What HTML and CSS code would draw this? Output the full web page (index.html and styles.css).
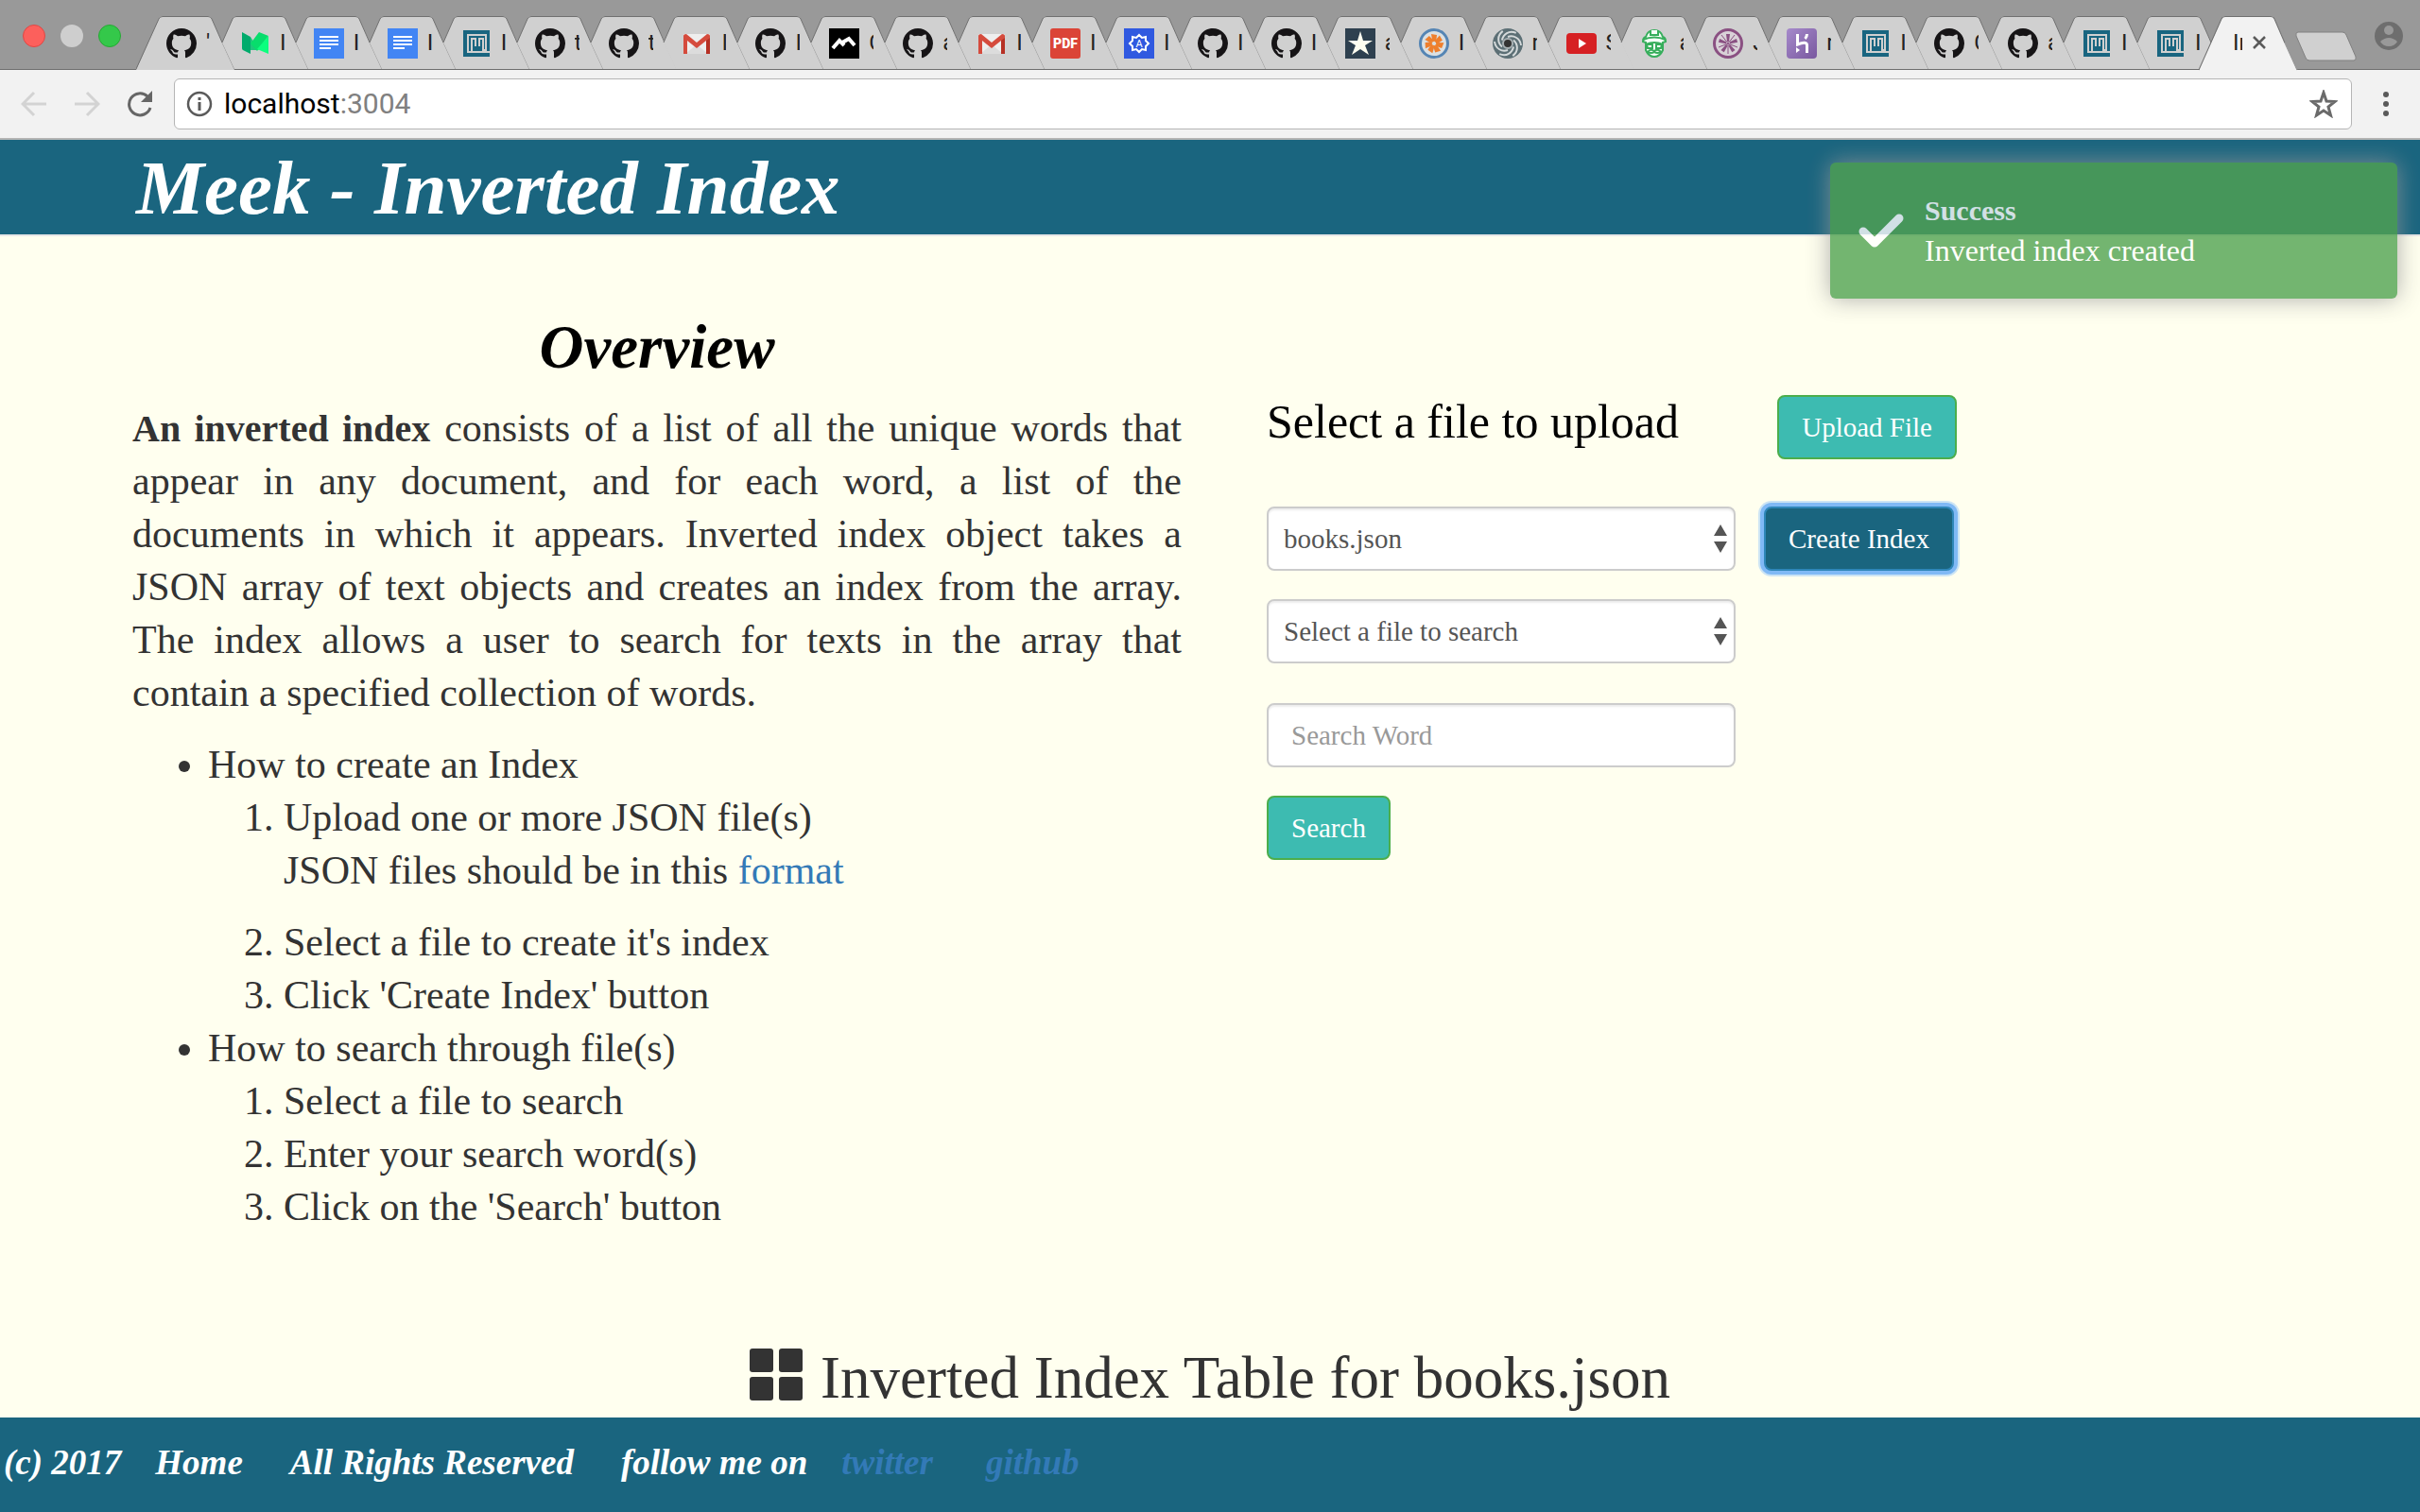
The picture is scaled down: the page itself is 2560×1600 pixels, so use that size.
FILE: index.html
```html
<!DOCTYPE html>
<html lang="en">
<head>
<meta charset="utf-8">
<title>Inverted Index</title>
<link rel="stylesheet" href="styles.css">
</head>
<body>
<svg class="sprite" aria-hidden="true">
  <symbol id="tab-shape" viewBox="0 0 106 57"><path class="fill" d="M26 56 13 28 24 3q1-3 4-3h48q3 0 4 3l24 53z"/><path class="edge" d="M13 28 24 3q1-2.500 4-2.500h48q3 0 4 2.500l11 25"/><path class="edge soft" d="M91 28l13 28"/></symbol>
  <symbol id="tab-first" viewBox="0 0 106 57" preserveAspectRatio="none"><path class="fill" d="M0 57 24 3q1-3 4-3h48q3 0 4 3l24 54z"/><path class="edge" d="M0 56 24 3q1-2.500 4-2.500h48q3 0 4 2.500l11 25"/><path class="edge soft" d="M91 28l13 28"/></symbol>
  <symbol id="github" viewBox="0 0 16 16"><path fill="#161416" d="M8 0C3.580 0 0 3.580 0 8c0 3.540 2.290 6.530 5.470 7.590.4.070.55-.17.55-.38 0-.19-.01-.82-.01-1.490-2.010.37-2.530-.49-2.690-.94-.09-.23-.48-.94-.82-1.130-.28-.15-.68-.52-.01-.53.63-.01 1.080.58 1.230.82.72 1.210 1.870.87 2.330.66.07-.52.28-.87.51-1.070-1.780-.2-3.640-.89-3.640-3.950 0-.87.31-1.590.82-2.150-.08-.2-.36-1.020.08-2.120 0 0 .67-.21 2.200.82.64-.18 1.320-.27 2-.27.68 0 1.360.09 2 .27 1.530-1.040 2.200-.82 2.200-.82.44 1.100.16 1.920.08 2.120.51.56.82 1.270.82 2.150 0 3.070-1.870 3.750-3.650 3.950.29.25.54.73.54 1.480 0 1.070-.01 1.930-.01 2.200 0 .21.15.46.55.38A8.010 8.010 0 0 0 16 8c0-4.420-3.580-8-8-8z"/></symbol>
  <symbol id="medium" viewBox="0 0 32 32"><path fill="#00ab6c" d="M2 4l9 5v18l-8-4q-1-.5-1-2z"/><path fill="#1fc77c" d="M11 9l9 14-9 0z"/><path fill="#08dd6c" d="M20 4l10 4-12 16-7-8z"/><path fill="#0dff7e" d="M30 8v19l-12-5z"/></symbol>
  <symbol id="doc" viewBox="0 0 32 32"><path fill="#4285f4" d="M0 0h32v32H0z"/><path fill="#fff" d="M6 8h20v2H6zM6 12h20v2H6zM6 16h20v2H6zM6 20h12v2H6z"/></symbol>
  <symbol id="meek" viewBox="0 0 32 32"><path fill="#196580" d="M2 2h28v28H2z"/><path fill="none" stroke="#d0d0d0" stroke-width="2" d="M30 25H7V7h19v16h-3V11h-4v8M11 25V11h4v8"/></symbol>
  <symbol id="gmail" viewBox="0 0 32 32"><path fill="#eee" d="M2 6h28v21H2z"/><path fill="#dcdcdc" d="M16 17l12 10H4z"/><path fill="#d54b3d" d="M2 8q0-2 3-2l11 9 11-9q3 0 3 2v19h-4V13L16 21 6 13v14H2z"/><path fill="#b63024" d="M26 13l4-3v17h-4z"/></symbol>
  <symbol id="peaks" viewBox="0 0 32 32"><path d="M0 0h32v32H0z"/><path fill="none" stroke="#fff" stroke-width="4" d="M4 21l7-8 5 5"/><path fill="none" stroke="#fff" stroke-width="4" d="M14 15l7-4 6 7"/></symbol>
  <symbol id="star-box" viewBox="0 0 32 32"><path fill="#2e404f" d="M0 0h32v32H0z"/><path fill="#fffef0" d="M16 3l3 10h10l-8 5 4 10-9-6-9 6 4-10-8-5h10z"/></symbol>
  <symbol id="flower" viewBox="0 0 32 32"><circle cx="16" cy="16" r="14.500" fill="#dbe0e2" stroke="#5585b4" stroke-width="3"/><g fill="#ee7f2d"><path id="petal" d="M13 6l6 1-1 8-4-3z"/><use href="#petal" transform="rotate(51 16 16)"/><use href="#petal" transform="rotate(103 16 16)"/><use href="#petal" transform="rotate(154 16 16)"/><use href="#petal" transform="rotate(206 16 16)"/><use href="#petal" transform="rotate(257 16 16)"/><use href="#petal" transform="rotate(309 16 16)"/></g></symbol>
  <symbol id="swirl" viewBox="0 0 32 32"><circle cx="16" cy="16" r="16" fill="#5c6f75"/><g fill="none" stroke="#d5dadb" stroke-width="2"><path id="arm" d="M16 9C22 7 29 10 30 18"/><use href="#arm" transform="rotate(60 16 16)"/><use href="#arm" transform="rotate(120 16 16)"/><use href="#arm" transform="rotate(180 16 16)"/><use href="#arm" transform="rotate(240 16 16)"/><use href="#arm" transform="rotate(300 16 16)"/></g><circle cx="16" cy="16" r="5" fill="#333" stroke="#a7b0b3" stroke-width="2"/></symbol>
  <symbol id="youtube" viewBox="0 0 32 32"><rect y="5" width="32" height="22" rx="4" fill="#d62023"/><path fill="#fff" d="M13 11v10l8-5z"/></symbol>
  <symbol id="conductor" viewBox="0 0 32 32"><g fill="#f4fff7" stroke="#37ae5c" stroke-width="2"><path d="M4 14q0-4 3-5 2-7 9-7t9 7q3 1 3 5l-3 1v8q-3 7-9 7t-9-7v-8z"/><path d="M4 12q12-5 24 0M7 17q9-4 18 0M12 2v5h8V2M8 17h6v4H9zM18 17h6l-1 4h-5zM9 25q3-4 7-1 4-3 7 1-4 2-7 0-3 2-7 0z"/></g></symbol>
  <symbol id="jasmine" viewBox="0 0 32 32"><circle cx="16" cy="16" r="14.500" fill="#d9d2d8" stroke="#8a5082" stroke-width="3"/><g fill="#8a5082"><path id="leaf" d="M14 6h4l-1 8h-2z"/><use href="#leaf" transform="rotate(72 16 16)"/><use href="#leaf" transform="rotate(144 16 16)"/><use href="#leaf" transform="rotate(216 16 16)"/><use href="#leaf" transform="rotate(288 16 16)"/></g><path stroke="#8a5082" d="M16 16v11M16 16l10 4M16 16L6 20M16 16l7-9M16 16L9 7"/></symbol>
  <symbol id="heroku" viewBox="0 0 32 32"><linearGradient id="violet" x2="1" y2="1"><stop stop-color="#a68acb"/><stop offset="1" stop-color="#79589f"/></linearGradient><rect width="32" height="32" rx="4" fill="url(#violet)"/><path fill="none" stroke="#fff" stroke-width="3" d="M11.500 6v11q10-4 10 1v8M21.500 6q0 3-2 5"/><path fill="#fff" d="M10 20v6l4-3z"/></symbol>
</svg>

<div class="browser">
  <div class="tabbar">
    <div class="lights"><span class="light red"></span><span class="light grey"></span><span class="light green"></span></div>
    <ul class="tabs">
      <li><svg class="shape"><use href="#tab-first"/></svg><svg class="icon"><use href="#github"/></svg><span>'</span></li>
      <li><svg class="shape"><use href="#tab-shape"/></svg><svg class="icon"><use href="#medium"/></svg><span>I</span></li>
      <li><svg class="shape"><use href="#tab-shape"/></svg><svg class="icon"><use href="#doc"/></svg><span>I</span></li>
      <li><svg class="shape"><use href="#tab-shape"/></svg><svg class="icon"><use href="#doc"/></svg><span>I</span></li>
      <li><svg class="shape"><use href="#tab-shape"/></svg><svg class="icon"><use href="#meek"/></svg><span>I</span></li>
      <li><svg class="shape"><use href="#tab-shape"/></svg><svg class="icon"><use href="#github"/></svg><span>t</span></li>
      <li><svg class="shape"><use href="#tab-shape"/></svg><svg class="icon"><use href="#github"/></svg><span>t</span></li>
      <li><svg class="shape"><use href="#tab-shape"/></svg><svg class="icon"><use href="#gmail"/></svg><span>I</span></li>
      <li><svg class="shape"><use href="#tab-shape"/></svg><svg class="icon"><use href="#github"/></svg><span>I</span></li>
      <li><svg class="shape"><use href="#tab-shape"/></svg><svg class="icon"><use href="#peaks"/></svg><span>C</span></li>
      <li><svg class="shape"><use href="#tab-shape"/></svg><svg class="icon"><use href="#github"/></svg><span>a</span></li>
      <li><svg class="shape"><use href="#tab-shape"/></svg><svg class="icon"><use href="#gmail"/></svg><span>I</span></li>
      <li><svg class="shape"><use href="#tab-shape"/></svg><svg class="icon" viewBox="0 0 32 32"><rect width="32" height="32" rx="3" fill="#db4437"/><text class="pdf" x="16" y="21">PDF</text></svg><span>I</span></li>
      <li><svg class="shape"><use href="#tab-shape"/></svg><svg class="icon" viewBox="0 0 32 32"><path fill="#3059e0" d="M0 0h32v32H0z"/><path fill="none" stroke="#fff" stroke-width="2" d="M16 7l3 3 4-1v4l3 3-3 3v4l-4-1-3 3-3-3-4 1v-4l-3-3 3-3V9l4 1z"/><text class="seal" x="16" y="20">A</text></svg><span>I</span></li>
      <li><svg class="shape"><use href="#tab-shape"/></svg><svg class="icon"><use href="#github"/></svg><span>I</span></li>
      <li><svg class="shape"><use href="#tab-shape"/></svg><svg class="icon"><use href="#github"/></svg><span>I</span></li>
      <li><svg class="shape"><use href="#tab-shape"/></svg><svg class="icon"><use href="#star-box"/></svg><span>a</span></li>
      <li><svg class="shape"><use href="#tab-shape"/></svg><svg class="icon"><use href="#flower"/></svg><span>I</span></li>
      <li><svg class="shape"><use href="#tab-shape"/></svg><svg class="icon"><use href="#swirl"/></svg><span>r</span></li>
      <li><svg class="shape"><use href="#tab-shape"/></svg><svg class="icon"><use href="#youtube"/></svg><span>S</span></li>
      <li><svg class="shape"><use href="#tab-shape"/></svg><svg class="icon"><use href="#conductor"/></svg><span>a</span></li>
      <li><svg class="shape"><use href="#tab-shape"/></svg><svg class="icon"><use href="#jasmine"/></svg><span>J</span></li>
      <li><svg class="shape"><use href="#tab-shape"/></svg><svg class="icon"><use href="#heroku"/></svg><span>r</span></li>
      <li><svg class="shape"><use href="#tab-shape"/></svg><svg class="icon"><use href="#meek"/></svg><span>I</span></li>
      <li><svg class="shape"><use href="#tab-shape"/></svg><svg class="icon"><use href="#github"/></svg><span>C</span></li>
      <li><svg class="shape"><use href="#tab-shape"/></svg><svg class="icon"><use href="#github"/></svg><span>a</span></li>
      <li><svg class="shape"><use href="#tab-shape"/></svg><svg class="icon"><use href="#meek"/></svg><span>I</span></li>
      <li><svg class="shape"><use href="#tab-shape"/></svg><svg class="icon"><use href="#meek"/></svg><span>I</span></li>
    </ul>
    <div class="current">
      <svg class="shape"><use href="#tab-first"/></svg>
      <span>In</span>
      <button class="plain" aria-label="Close tab"><svg width="16" height="16"><path d="M2 2l12 12M14 2L2 14" stroke="#5a5a5a" stroke-width="2.500"/></svg></button>
    </div>
    <button class="plain new-tab" aria-label="New tab"><svg width="66" height="34"><path d="M4 1h47q3 0 4 3l10 23q1 4-2 4H16q-3 0-4-3L2 5q-1-4 2-4z" fill="#d0d0d0" stroke="#808080"/></svg></button>
    <button class="plain profile" aria-label="Profile"><svg width="32" height="32"><circle cx="16" cy="16" r="15" fill="#6e6e6e"/><circle cx="16" cy="10" r="5" fill="#999"/><path d="M7 22q9-8 18 0-3 5-9 5t-9-5z" fill="#999"/></svg></button>
  </div>
  <div class="toolbar">
    <button class="plain" aria-label="Back"><svg width="28" height="28"><path d="M27 14H3M14 2L2 14l12 12" fill="none" stroke="#d3d3d3" stroke-width="3"/></svg></button>
    <button class="plain" aria-label="Forward"><svg width="28" height="28"><path d="M1 14h24M14 2l12 12-12 12" fill="none" stroke="#d3d3d3" stroke-width="3"/></svg></button>
    <button class="plain" aria-label="Reload"><svg width="28" height="28"><path d="M22 6A11.500 11.500 0 1 0 25 18" fill="none" stroke="#666" stroke-width="3"/><path d="M27 0v12H15z" fill="#666"/></svg></button>
    <div class="address">
      <svg width="28" height="28"><circle cx="14" cy="14" r="12" fill="none" stroke="#5a5a5a" stroke-width="2.500"/><path d="M14 12v9M14 7v3" stroke="#5a5a5a" stroke-width="3"/></svg>
      <span class="url">localhost<span class="port">:3004</span></span>
      <button class="plain" aria-label="Bookmark"><svg width="30" height="30"><path d="M15 3l3 9 9 .5-7 5.500 2.500 9L15 22l-7.500 5 2.500-9-7-5.500 9-.5z" fill="none" stroke="#6a6a6a" stroke-width="3"/></svg></button>
    </div>
    <button class="plain menu" aria-label="Menu"><svg width="8" height="28" fill="#5a5a5a"><circle cx="4" cy="4" r="3"/><circle cx="4" cy="14" r="3"/><circle cx="4" cy="24" r="3"/></svg></button>
  </div>
</div>

<div class="page">
  <header class="navbar"><h1>Meek - Inverted Index</h1></header>
  <div class="toast" role="status">
    <svg width="48" height="40"><path d="M5 21l12 12L43 7" fill="none" stroke="#fff" stroke-width="9" stroke-linecap="round" stroke-linejoin="round"/></svg>
    <div><strong>Success</strong><p>Inverted index created</p></div>
  </div>

  <main>
    <div class="columns">
      <section class="overview">
        <h2>Overview</h2>
        <p class="intro"><b>An inverted index</b> consists of a list of all the unique words that appear in any document, and for each word, a list of the documents in which it appears. Inverted index object takes a JSON array of text objects and creates an index from the array. The index allows a user to search for texts in the array that contain a specified collection of words.</p>
        <ul>
          <li>How to create an Index
            <ol>
              <li>Upload one or more JSON file(s)<p>JSON files should be in this <a href="#format">format</a></p></li>
              <li>Select a file to create it's index</li>
              <li>Click 'Create Index' button</li>
            </ol>
          </li>
          <li>How to search through file(s)
            <ol>
              <li>Select a file to search</li>
              <li>Enter your search word(s)</li>
              <li>Click on the 'Search' button</li>
            </ol>
          </li>
        </ul>
      </section>
      <form class="controls">
        <h3>Select a file to upload</h3>
        <button type="button" class="btn upload">Upload File</button>
        <div class="select first">
          <select aria-label="File to index"><option>books.json</option></select>
          <svg width="14" height="30" fill="#555"><path d="M0 12L7 0l7 12zM0 18h14L7 30z"/></svg>
        </div>
        <button type="button" class="btn create">Create Index</button>
        <div class="select second">
          <select aria-label="File to search"><option>Select a file to search</option></select>
          <svg width="14" height="30" fill="#555"><path d="M0 12L7 0l7 12zM0 18h14L7 30z"/></svg>
        </div>
        <input class="word" type="text" placeholder="Search Word" aria-label="Search Word">
        <button type="button" class="btn search">Search</button>
      </form>
    </div>
    <h2 class="table-title"><svg width="56" height="56" fill="#333"><rect width="25" height="25" rx="3"/><rect x="31" width="25" height="25" rx="3"/><rect y="30" width="25" height="25" rx="3"/><rect x="31" y="30" width="25" height="25" rx="3"/></svg>Inverted Index Table for books.json</h2>
  </main>

  <footer>
    <span>(c) 2017</span><span class="home">Home</span><span class="rights">All Rights Reserved</span><span class="follow">follow me on</span><a class="twitter" href="#twitter">twitter</a><a href="#github-profile">github</a>
  </footer>
</div>
</body>
</html>
```
FILE: styles.css
```css
* { box-sizing: border-box; }
body {
  margin: 0;
  min-height: 100vh;
  display: flex;
  flex-direction: column;
  background: #ffffef;
  color: #333;
  font: 42px/56px "Liberation Serif", serif;
}
h1, h2, h3, p, ul, ol { margin: 0; }
svg { display: block; flex: none; }
button, input, select { font: inherit; }
.sprite { position: absolute; width: 0; height: 0; }
.plain { flex: none; padding: 0; border: 0; background: none; line-height: 0; }

/* Browser window */
.browser { font-family: Roboto, sans-serif; }
.tabbar {
  display: flex;
  height: 74px;
  padding-top: 17px;
  background: #999;
  border-bottom: 1px solid #6e6e6e;
}
.lights { flex: none; display: flex; gap: 16px; width: 144px; padding: 9px 0 0 24px; }
.light { width: 24px; height: 24px; border-radius: 50%; }
.red { background: #fc605c; border: 1px solid #df4744; }
.grey { background: #cecece; }
.green { background: #34c84a; border: 1px solid #27a834; }
.tabs { flex: 1; display: flex; min-width: 0; padding: 0; list-style: none; }
.tabs li { position: relative; flex: 1 0 0; min-width: 0; display: flex; }
.tabs .shape, .current .shape { position: absolute; left: 0; top: 0; width: 106px; height: 57px; }
.fill { fill: var(--tab, #d0d0d0); }
.edge { fill: none; stroke: #707070; }
.soft { stroke: #989898; }
.tabs .icon { position: relative; width: 32px; height: 32px; margin: 13px 10px 0 32px; }
.pdf, .seal { fill: #fff; font-size: 14px; font-weight: 900; text-anchor: middle; }
.seal { font-size: 11px; font-weight: 400; }
.tabs span, .current span {
  position: relative;
  flex: none;
  width: 5px;
  height: 30px;
  margin-top: 13px;
  overflow: hidden;
  color: #222;
  font-size: 24px;
  line-height: 30px;
}
.current { position: relative; flex: none; display: flex; width: 101px; padding-left: 36px; }
.current .shape { height: 58px; --tab: #f2f2f2; }
.current span { width: 10px; margin-right: 10px; white-space: nowrap; }
.current button { position: relative; }
.new-tab { align-self: flex-start; margin-top: 16px; }
.profile { align-self: flex-start; margin: 5px 17px 0 18px; }
.toolbar {
  display: flex;
  align-items: center;
  gap: 28px;
  height: 74px;
  padding: 0 32px 0 22px;
  background: #f2f2f2;
  border-bottom: 2px solid #b4b4b4;
}
.address {
  flex: 1;
  display: flex;
  align-items: center;
  gap: 12px;
  height: 54px;
  margin-left: -6px;
  padding: 0 14px 0 12px;
  background: #fff;
  border: 1px solid #b5b5b5;
  border-radius: 6px;
}
.url { flex: 1; color: #000; font-size: 30px; }
.port { color: #808080; }
.menu { margin-left: 4px; }

/* Application page */
.page { position: relative; flex: 1; display: flex; flex-direction: column; }
.navbar {
  height: 102px;
  padding: 0 144px;
  background: #1a657f;
  border-bottom: 2px solid #e7e7e7;
  color: #fff;
}
h1 { font-size: 81px; line-height: 102px; font-style: italic; }
.toast {
  position: absolute;
  top: 24px;
  right: 24px;
  display: flex;
  align-items: center;
  gap: 22px;
  width: 600px;
  height: 144px;
  padding-left: 30px;
  border-radius: 6px;
  background: #51a351;
  box-shadow: 0 0 24px #999;
  color: #fff;
  font-size: 32px;
  line-height: 42px;
  opacity: .8;
}
.toast strong { display: block; font-size: 30px; }
main { flex: 1; }
.columns { display: grid; grid-template-columns: 1fr 1fr; padding: 84px 110px 0; }
.overview { padding: 0 30px; }
.overview h2 {
  margin-bottom: 24px;
  color: #000;
  font-size: 65px;
  line-height: 67px;
  font-style: italic;
  text-align: center;
}
.intro { margin-bottom: 20px; text-align: justify; }
.intro b { font-size: 40px; line-height: 40px; }
.overview ul, .overview ol { padding-left: 80px; }
.overview li p { margin-bottom: 20px; }
a { color: #337ab7; text-decoration: none; }
.controls {
  display: grid;
  grid-template-columns: 496px 204px;
  grid-template-rows: 68px 50px 68px 30px 68px 42px 68px 30px 68px;
  justify-content: start;
  align-content: start;
  column-gap: 30px;
  padding: 84px 60px 0;
}
h3 { color: #000; font-size: 50px; line-height: 56px; font-weight: 500; }
.btn {
  justify-self: start;
  height: 68px;
  padding: 0 24px;
  border: 2px solid #4cae4c;
  border-radius: 8px;
  background: #3dbbb1;
  color: #fff;
  font-size: 29px;
  line-height: 40px;
}
.upload { justify-self: end; }
.select { position: relative; }
.select svg { position: absolute; right: 9px; top: 19px; pointer-events: none; }
select, .word {
  width: 100%;
  height: 68px;
  padding: 0 16px;
  border: 2px solid #ccc;
  border-radius: 8px;
  background: #fff;
  box-shadow: inset 0 2px 2px rgba(0, 0, 0, .075);
  color: #555;
  font-size: 29px;
  appearance: none;
}
.word { padding: 0 24px; }
.word::placeholder { color: #999; opacity: 1; }
.first, .create { grid-row: 3; }
.second { grid-row: 5; }
.word { grid-row: 7; }
.search { grid-row: 9; }
.create {
  background: #1a657f;
  border-color: #2e86b8;
  box-shadow: 0 0 0 4px #80b9f5, 0 0 0 6px #cce4f4;
}
.table-title {
  display: flex;
  justify-content: center;
  gap: 19px;
  padding-top: 122px;
  font-size: 63px;
  line-height: 62px;
  font-weight: 400;
}
footer {
  display: flex;
  align-items: center;
  height: 100px;
  padding: 0 4px 4px;
  background: #1a657f;
  color: #fff;
  font-size: 37px;
  font-weight: bold;
  font-style: italic;
}
.home { margin: 0 50px 0 36px; }
.follow { margin: 0 36px 0 50px; }
.twitter { margin-right: 56px; }
```
